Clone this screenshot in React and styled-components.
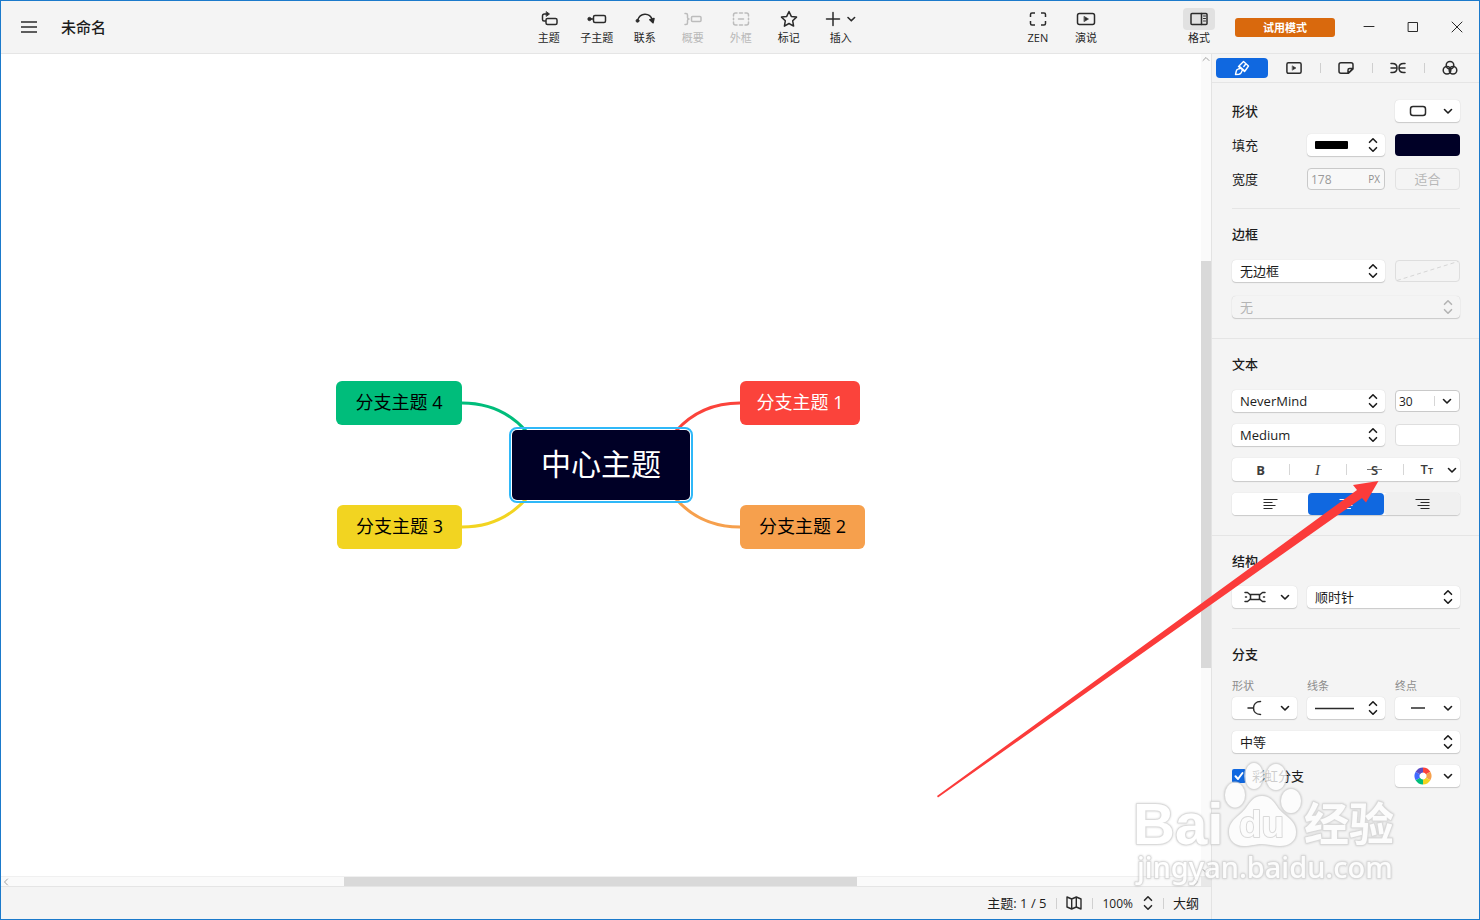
import React from 'react';
import styled, { createGlobalStyle, css } from 'styled-components';

const GlobalStyle = createGlobalStyle`
  *, *::before, *::after { box-sizing: border-box; }
  body { margin: 0; background: #f4f4f4; }
  body, button, input, select {
    font-family: "Open Sans", "Noto Sans CJK SC", sans-serif;
    font-size: 13px;
    color: #1c1c1c;
  }
  button { border: 0; padding: 0; background: none; cursor: pointer; }
`;

/* ---------- shell ---------- */
const Shell = styled.div`
  position: relative;
  display: flex;
  flex-direction: column;
  min-height: 100vh;
  border: 1px solid #1b7acb;
  background: #f4f4f4;
  overflow: hidden;
`;

const Header = styled.header`
  display: grid;
  grid-template-columns: minmax(0, 523fr) auto minmax(0, 145fr) auto minmax(0, 65fr) auto;
  height: 53px;
  border-bottom: 1px solid #e5e5e5;
`;

const DocInfo = styled.div`
  display: flex;
  align-items: center;
  gap: 24px;
  padding-left: 20px;
`;

const MenuButton = styled.button`
  display: flex;
  width: 16px;
  height: 16px;
`;

const DocTitle = styled.h1`
  margin: 0;
  font-size: 15px;
  font-weight: 500;
  line-height: 20px;
`;

const ToolGroup = styled.div`
  display: flex;
`;

const Tool = styled.button`
  display: flex;
  flex-direction: column;
  align-items: center;
  width: ${p => (p.$wide ? 56 : 48)}px;
  padding-top: 7px;
  font-size: 11px;
  line-height: 16px;
  color: ${p => (p.disabled ? '#b9b9b9' : '#262626')};
  span { white-space: nowrap; }
  svg { border-radius: 4px; background: ${p => (p.$active ? '#e1e1e1' : 'none')}; }
`;

const HeaderEnd = styled.div`
  display: flex;
  align-items: center;
`;

const FormatSlot = styled.div`
  align-self: stretch;
  display: flex;
  margin-right: 12px;
`;

const TrialButton = styled.button`
  width: 100px;
  height: 19px;
  margin-right: 12px;
  border-radius: 3px;
  background: #d9690d;
  color: #fff;
  font-size: 11px;
  line-height: 19px;
  font-weight: 700;
`;

const WindowButton = styled.button`
  display: flex;
  align-items: center;
  justify-content: center;
  width: 44px;
  height: 52px;
`;

const Body = styled.div`
  display: flex;
  flex: 1;
`;

const Workspace = styled.main`
  display: flex;
  flex-direction: column;
  flex: 1;
  min-width: 0;
`;

const CanvasRow = styled.div`
  display: flex;
  flex: 1;
`;

const Canvas = styled.div`
  display: flex;
  flex: 1;
  align-items: center;
  justify-content: center;
  background: #fff;
`;

/* ---------- scroll bars ---------- */
const Scroll = styled.div`
  display: flex;
  background: #fafafa;
  ${p => (p.$vertical
    ? css`flex-direction: column; width: 10px;`
    : css`flex: 1; height: 10px; border-top: 1px solid #f0f0f0;`)}
`;
const ScrollSpace = styled.div`flex: ${p => p.$grow};`;
const ScrollThumb = styled.div`flex: ${p => p.$grow}; background: #d9d9d9;`;
const ScrollArrow = styled.button`
  display: flex;
  align-items: center;
  justify-content: center;
  width: 10px;
  height: 10px;
`;
const ScrollRow = styled.div`display: flex;`;
const ScrollCorner = styled.div`width: 10px; height: 10px; background: #e8e8e8;`;

/* ---------- mind map ---------- */
const MapArea = styled.div`
  position: relative;
  width: 530px;
  height: 168px;
`;
const Links = styled.svg`position: absolute; inset: 0;`;
const Topic = styled.div`
  position: absolute;
  display: flex;
  align-items: center;
  justify-content: center;
  left: ${p => p.$x}px;
  top: ${p => p.$y}px;
  width: ${p => p.$w}px;
  height: 44px;
  padding-bottom: 2px;
  border-radius: 6px;
  background: ${p => p.$bg};
  color: ${p => p.$fg || '#000'};
  font-size: 18px;
  line-height: 24px;
  white-space: pre;
`;
const CentralTopic = styled(Topic)`
  height: 70px;
  border-radius: 5px;
  font-size: 30px;
  line-height: 40px;
  outline: 2px solid #2fb8f8;
  outline-offset: 1px;
`;

/* ---------- status bar ---------- */
const StatusBar = styled.footer`
  display: flex;
  align-items: center;
  justify-content: flex-end;
  height: 33px;
  padding-right: 12px;
  border-top: 1px solid #e5e5e5;
`;
const StatusSep = styled.span`
  width: 1px;
  height: 11px;
  margin: 0 9px 0 10px;
  background: #d0d0d0;
`;
const StatusText = styled.span`
  font-size: 13px;
  line-height: 20px;
  white-space: pre;
`;
const StatusButton = styled.button`
  display: flex;
  align-items: center;
  gap: 10px;
  height: 20px;
  font-size: 12px;
`;

/* ---------- format panel ---------- */
const Panel = styled.aside`
  width: 268px;
  border-left: 1px solid #e3e3e3;
`;
const Tabs = styled.div`
  display: flex;
  height: 29px;
  padding: 4px 3px 4px 4px;
  border-bottom: 1px solid #e5e5e5;
`;
const Tab = styled.button`
  position: relative;
  display: flex;
  flex: 1;
  align-items: center;
  justify-content: center;
  height: 20px;
  border-radius: 4px;
  background: ${p => (p.$active ? '#1068e0' : 'none')};
  ${p => p.$divided && css`
    &::after {
      content: '';
      position: absolute;
      right: -1px;
      top: 5px;
      width: 1px;
      height: 10px;
      background: #cfcfcf;
    }
  `}
`;
const Section = styled.section`
  display: flex;
  flex-direction: column;
  gap: ${p => p.$gap || 12}px;
  ${p => (p.$full
    ? css`padding: 15px 19px 20px 20px;`
    : css`margin: 0 19px 0 20px; padding: ${p.$first ? '17px 0 18px' : '15px 0 20px'};`)}
  border-bottom: ${p => (p.$last ? '0' : '1px solid #e5e5e5')};
`;
const SectionTitle = styled.h2`
  margin: 0 0 ${p => p.$space || 0}px;
  font-size: 13px;
  line-height: 20px;
  font-weight: 500;
`;
const Row = styled.div`
  display: grid;
  grid-template-columns: 65fr 78fr 65fr;
  column-gap: 10px;
  align-items: center;
`;
const span = css`grid-column: span ${p => p.$span || 1};`;
const RowLabel = styled.label`
  ${span}
  font-size: 13px;
  line-height: 20px;
  font-weight: ${p => (p.$strong ? 500 : 400)};
`;
const Caption = styled.span`
  font-size: 11px;
  line-height: 16px;
  color: #8c8c8c;
`;
const CaptionRow = styled(Row)`margin-bottom: -9px;`;

const surface = css`
  height: 22px;
  border-radius: 4px;
  background: #fff;
  box-shadow: 0 0 1px rgba(0, 0, 0, 0.18), 0 1px 1px rgba(0, 0, 0, 0.16);
`;
const Picker = styled.button`
  ${span}
  ${surface}
  display: flex;
  align-items: center;
  justify-content: space-between;
  padding: 0 7px 0 ${p => p.$pad || 8}px;
`;
const SelectBox = styled.div`
  ${span}
  ${surface}
  display: grid;
  align-items: center;
  > * { grid-area: 1 / 1; }
  > svg { justify-self: end; margin-right: 7px; pointer-events: none; }
  ${p => p.$disabled && css`background: #f4f4f4;`}
`;
const Select = styled.select`
  appearance: none;
  width: 100%;
  height: 22px;
  padding: 0 24px 0 8px;
  border: 0;
  background: transparent;
  color: #1c1c1c;
  opacity: 1;
  &:disabled { color: #b4b4b4; }
`;
const Swatch = styled.button`
  height: 22px;
  border-radius: 4px;
  background: ${p => p.$color};
  ${p => p.$outlined && css`border: 1px solid #dedede;`}
  svg { display: block; width: 100%; height: 100%; }
`;
const Field = styled.div`
  display: flex;
  align-items: center;
  height: 22px;
  padding: 0 4px 0 3px;
  border: 1px solid #c9c9c9;
  border-radius: 4px;
  background: ${p => (p.$white ? '#fff' : '#f8f8f8')};
  small { font-size: 10px; color: #8f8f8f; }
`;
const FieldInput = styled.input`
  flex: 1;
  min-width: 0;
  width: 20px;
  padding: 0;
  border: 0;
  background: transparent;
  font-size: 12px;
  &:disabled { color: #9a9a9a; }
`;
const FieldButton = styled.button`
  display: flex;
  padding: 0 3px 0 7px;
  border-left: 1px solid #d6d6d6;
`;
const FitButton = styled.button`
  height: 22px;
  border: 1px solid #e2e2e2;
  border-radius: 4px;
  color: #b8b8b8;
  line-height: 20px;
`;
const StyleBar = styled.div`
  ${surface}
  display: flex;
  height: 23px;
`;
const StyleButton = styled.button`
  position: relative;
  display: flex;
  width: 25%;
  align-items: center;
  justify-content: ${p => (p.$menu ? 'flex-end' : 'center')};
  gap: 14px;
  padding-right: ${p => (p.$menu ? 3 : 0)}px;
  color: #3c3c3c;
  &:not(:first-child)::before {
    content: '';
    position: absolute;
    left: 0;
    top: 6px;
    width: 1px;
    height: 11px;
    background: #d6d6d6;
  }
`;
const Glyph = styled.span`
  font-family: ${p => (p.$serif ? '"Liberation Serif", serif' : '"Open Sans", sans-serif')};
  font-size: ${p => p.$size || 13}px;
  line-height: 20px;
  font-weight: ${p => p.$weight || 400};
  font-style: ${p => (p.$serif ? 'italic' : 'normal')};
`;
const Struck = styled(Glyph)`
  padding: 0 4px;
  background: linear-gradient(#777, #777) center / 100% 1px no-repeat;
`;
const CaseGlyphs = styled.span`
  display: flex;
  align-items: baseline;
`;
const AlignBar = styled.div`
  ${surface}
  display: flex;
`;
const AlignButton = styled.button`
  display: flex;
  flex: 1;
  align-items: center;
  justify-content: center;
  border-radius: 4px;
  background: ${p => p.$bg};
`;
const CheckLabel = styled.label`
  grid-column: span 2;
  display: flex;
  align-items: center;
  gap: 6px;
  line-height: 20px;
`;
const Check = styled.input`
  appearance: none;
  width: 14px;
  height: 14px;
  margin: 0;
  border-radius: 2px;
  background: #1068e0;
`;
const CheckBoxWrap = styled.span`
  display: grid;
  > * { grid-area: 1 / 1; }
  > svg { pointer-events: none; }
`;

/* ---------- overlays ---------- */
const Overlay = styled.svg`
  position: absolute;
  right: ${p => p.$right}px;
  top: ${p => p.$top}px;
  pointer-events: none;
`;
const WatermarkArt = styled(Overlay)`
  opacity: 0.78;
  fill: #fff;
  stroke: #d2d2d2;
  stroke-width: 2px;
  stroke-linejoin: round;
  paint-order: stroke;
  filter: drop-shadow(0 0 1px rgba(0, 0, 0, 0.2));
`;
const BrandText = styled.text`
  font-family: ${p => (p.$cjk ? '"Noto Sans CJK SC"' : '"Liberation Sans"')}, sans-serif;
  font-size: ${p => p.$size}px;
  font-weight: 700;
`;
const UrlText = styled.text`
  font-family: "Noto Sans", sans-serif;
  font-size: 29px;
  font-weight: 500;
`;

/* ---------- icons ---------- */
const Ico = ({ w = 32, h = 22, sw = 1.5, color = '#2b2b2b', children }) => (
  <svg width={w} height={h} viewBox={`0 0 ${w} ${h}`} fill="none" stroke={color}
    strokeWidth={sw} strokeLinecap="round" strokeLinejoin="round" aria-hidden="true">
    {children}
  </svg>
);
const Chevron = () => <Ico w={10} h={10} sw={1.6} color="#1c1c1c"><path d="M1.5 3.5 5 7l3.5-3.5" /></Ico>;
const UpDown = ({ color = '#1c1c1c' }) => (
  <Ico w={10} h={16} sw={1.6} color={color}><path d="M1.5 5.3 5 1.8l3.5 3.5M1.500 10.7 5 14.2l3.5-3.5" /></Ico>
);

const icons = {
  topic: <Ico><rect x="13" y="10.500" width="11" height="6" rx="1.500" /><path d="M14 6h-2.500Q9.500 6 9.500 8v3.500q0 1.500 1.500 1.500h1.500" /><path d="m13.500 3.800 3 2.200-3 2.200z" fill="#2b2b2b" strokeWidth="0.800" /></Ico>,
  sub: <Ico><rect x="12.500" y="7.500" width="12" height="7" rx="1.500" /><path d="M9 11h3" /><circle cx="8.500" cy="11" r="1.700" fill="#2b2b2b" strokeWidth="0.800" /></Ico>,
  link: <Ico><path d="M8.500 12.500c2.500-8 12-8.500 15-.5" /><circle cx="8.500" cy="12.800" r="1.500" fill="#2b2b2b" strokeWidth="0.800" /><path d="m20.800 11.800 4.200-1.300-1 4.300z" fill="#2b2b2b" /></Ico>,
  summary: <Ico color="#bcbcbc"><path d="M8 5.500h1q1.500 0 1.500 1.500v2.500q0 1.500 1.500 1.500-1.500 0-1.500 1.500V15q0 1.500-1.500 1.500H8" /><rect x="14.500" y="8.500" width="9.500" height="5" rx="1" /></Ico>,
  boundary: <Ico color="#bcbcbc"><path d="M8.500 8V7q0-2 2-2H12M14.500 5h3M20 5h1.500q2 0 2 2v1M23.500 10.200v1.600M23.500 14v1q0 2-2 2H20M17.500 17h-3M12 17h-1.500q-2 0-2-2v-1M8.500 11.800v-1.600M13.500 11h5" /></Ico>,
  star: <Ico><path d="m16 3.500 2.300 4.900 5.200.7-3.800 3.700.9 5.300-4.600-2.600-4.600 2.600.9-5.300-3.800-3.700 5.200-.7z" /></Ico>,
  plus: <Ico><path d="M8 4.500v13M1.500 11h13" /><path d="m23 9.500 3.300 3.300 3.300-3.300" strokeWidth="1.600" /></Ico>,
  zen: <Ico><path d="M8.500 9V6.500q0-1.500 1.500-1.500h3M19 5h3q1.500 0 1.500 1.500V9M23.500 13v2.500q0 1.500-1.500 1.500h-3M13 17h-3q-1.500 0-1.500-1.500V13" strokeLinecap="butt" /></Ico>,
  play: <Ico><rect x="7.500" y="5.500" width="17" height="11" rx="2" /><path d="m14.300 8.500 4.200 2.500-4.200 2.500z" fill="#2b2b2b" strokeWidth="0.600" /></Ico>,
  format: <Ico><rect x="8" y="5.500" width="16" height="11" rx="1" /><path d="M18.500 5.500v11" /><path d="M20.500 8h2M20.500 10.500h2M20.500 13h2" strokeWidth="1" /></Ico>,
};

const tools = [
  { icon: icons.topic, label: '主题' },
  { icon: icons.sub, label: '子主题' },
  { icon: icons.link, label: '联系' },
  { icon: icons.summary, label: '概要', disabled: true },
  { icon: icons.boundary, label: '外框', disabled: true },
  { icon: icons.star, label: '标记' },
  { icon: icons.plus, label: '插入', wide: true },
];

const tabs = [
  { label: '样式', icon: <Ico w={16} h={16} sw={1.4} color="#fff"><path d="m9.500 1.500 5 4.500-3.500 5-6-5zM4.500 6.500l6 5M12 3.800 9.800 6.500M6 8.500l-2 .7q-1.300.4-1.700 1.800L1.500 14.500l3.500-.3q1.700-.2 2.300-1.700L8 10.800" /></Ico> },
  { label: '演说', divided: true, icon: <Ico w={16} h={16}><rect x="0.900" y="2.700" width="14.200" height="10.600" rx="1.500" /><path d="m6.500 5.900 3.500 2.100-3.500 2.100z" fill="#2b2b2b" strokeWidth="0.500" /></Ico> },
  { label: '标记', divided: true, icon: <Ico w={16} h={16}><path d="M3 2.700h10q2 0 2 2V9l-4.500 4.300H3q-2 0-2-2V4.700q0-2 2-2zM15 8.500h-3.500q-1.500 0-1.500 1.500v3.300z" /></Ico> },
  { label: '结构', divided: true, icon: <Ico w={16} h={16}><path d="M1 3.500h1.500Q7 3.500 7 8t-4.500 4.500H1M1 8h6M15 3.500h-1.500Q9 3.500 9 8t4.500 4.500H15M9 8h6" /></Ico> },
  { label: '配色', icon: <Ico w={16} h={16}><circle cx="8" cy="5.200" r="3.800" /><circle cx="5" cy="10.200" r="3.800" /><circle cx="11" cy="10.200" r="3.800" /></Ico> },
];

const branches = [
  { text: '分支主题 4', x: 0, y: 0, w: 126, bg: '#00bd7b' },
  { text: '分支主题 3', x: 1, y: 124, w: 125, bg: '#f2d421' },
  { text: '分支主题 1', x: 404, y: 0, w: 120, bg: '#fb433b', fg: '#fff' },
  { text: '分支主题 2', x: 404, y: 124, w: 125, bg: '#f6a04d' },
];

const alignPaths = {
  left: 'M.5 1.500h14M.5 4.500h9M.5 7.500h12M.5 10.500h9',
  center: 'M.5 1.500h14M3 4.500h9M1.500 7.500h12M3 10.500h9',
  right: 'M.5 1.500h14M5.500 4.500h9M2.500 7.500h12M5.500 10.500h9',
};
const AlignIcon = ({ kind, color }) => (
  <Ico w={15} h={12} sw={1.2} color={color}><path d={alignPaths[kind]} strokeLinecap="butt" /></Ico>
);

const wheel = ['#fb433b', '#f6a04d', '#f2d421', '#00bd7b', '#4169ff', '#5b4bc4'];

function DropSelect({ label, value, cols, disabled }) {
  return (
    <SelectBox $span={cols} $disabled={disabled}>
      <Select aria-label={label} defaultValue={value} disabled={disabled}>
        <option>{value}</option>
      </Select>
      <UpDown color={disabled ? '#b4b4b4' : undefined} />
    </SelectBox>
  );
}

function TopBar() {
  return (
    <Header>
      <DocInfo>
        <MenuButton aria-label="菜单"><Ico w={16} h={16} sw={1.6}><path d="M0 3h16M0 8h16M0 13h16" strokeLinecap="butt" /></Ico></MenuButton>
        <DocTitle>未命名</DocTitle>
      </DocInfo>
      <ToolGroup>
        {tools.map(t => (
          <Tool key={t.label} disabled={t.disabled} $wide={t.wide}>{t.icon}<span>{t.label}</span></Tool>
        ))}
      </ToolGroup>
      <div />
      <ToolGroup>
        <Tool>{icons.zen}<span>ZEN</span></Tool>
        <Tool>{icons.play}<span>演说</span></Tool>
      </ToolGroup>
      <div />
      <HeaderEnd>
        <FormatSlot><Tool $active>{icons.format}<span>格式</span></Tool></FormatSlot>
        <TrialButton>试用模式</TrialButton>
        <WindowButton aria-label="最小化"><Ico w={12} h={12} sw={1}><path d="M1 5.500h10" /></Ico></WindowButton>
        <WindowButton aria-label="最大化"><Ico w={12} h={12} sw={1}><rect x="1.500" y="1.500" width="9" height="9" /></Ico></WindowButton>
        <WindowButton aria-label="关闭"><Ico w={12} h={12} sw={1}><path d="m1 1 10 10M11 1 1 11" /></Ico></WindowButton>
      </HeaderEnd>
    </Header>
  );
}

function MindMap() {
  return (
    <Canvas>
      <MapArea>
        <Links width="530" height="168" viewBox="0 0 530 168" fill="none" strokeWidth="3">
          <path d="M126 22c28 0 48 10 64 28" stroke="#00bd7b" />
          <path d="M126 146c28 0 48-10 64-28" stroke="#f2d421" />
          <path d="M404 22c-28 0-48 10-64 28" stroke="#fb433b" />
          <path d="M404 146c-28 0-48-10-64-28" stroke="#f6a04d" />
        </Links>
        {branches.map(b => (
          <Topic key={b.text} $x={b.x} $y={b.y} $w={b.w} $bg={b.bg} $fg={b.fg}>{b.text}</Topic>
        ))}
        <CentralTopic $x={176} $y={49} $w={178} $bg="#000026" $fg="#fff">中心主题</CentralTopic>
      </MapArea>
    </Canvas>
  );
}

const arrow = d => <Ico w={8} h={8} sw={1} color="#a0a0a0"><path d={d} /></Ico>;

function FormatPanel() {
  return (
    <Panel>
      <Tabs>
        {tabs.map((t, i) => (
          <Tab key={t.label} aria-label={t.label} $active={i === 0} $divided={t.divided}>{t.icon}</Tab>
        ))}
      </Tabs>

      <Section $first>
        <Row>
          <RowLabel as="span" $span={2} $strong>形状</RowLabel>
          <Picker aria-label="形状" $pad={14}>
            <Ico w={18} h={12}><rect x="1.500" y="1.500" width="15" height="9" rx="2.500" /></Ico><Chevron />
          </Picker>
        </Row>
        <Row>
          <RowLabel as="span">填充</RowLabel>
          <Picker aria-label="填充">
            <svg width="33" height="8" aria-hidden="true"><rect width="33" height="8" rx="1" /></svg><UpDown />
          </Picker>
          <Swatch aria-label="填充颜色" $color="#000026" />
        </Row>
        <Row>
          <RowLabel htmlFor="topic-width">宽度</RowLabel>
          <Field><FieldInput id="topic-width" defaultValue="178" disabled /><small>PX</small></Field>
          <FitButton disabled>适合</FitButton>
        </Row>
      </Section>

      <Section $full $gap={14}>
        <SectionTitle $space={2}>边框</SectionTitle>
        <Row>
          <DropSelect label="边框" value="无边框" cols={2} />
          <Swatch aria-label="边框颜色" $color="none" $outlined disabled>
            <svg viewBox="0 0 63 20" preserveAspectRatio="none" aria-hidden="true"><path d="M1 19.500 62 .5" stroke="#d6d6d6" strokeDasharray="4 3" /></svg>
          </Swatch>
        </Row>
        <Row><DropSelect label="边框粗细" value="无" cols={3} disabled /></Row>
      </Section>

      <Section $full>
        <SectionTitle $space={4}>文本</SectionTitle>
        <Row>
          <DropSelect label="字体" value="NeverMind" cols={2} />
          <Field $white>
            <FieldInput aria-label="字号" defaultValue="30" />
            <FieldButton aria-label="选择字号"><Chevron /></FieldButton>
          </Field>
        </Row>
        <Row>
          <DropSelect label="字重" value="Medium" cols={2} />
          <Swatch aria-label="文本颜色" $color="#fff" $outlined />
        </Row>
        <StyleBar>
          <StyleButton aria-label="粗体"><Glyph $weight={700}>B</Glyph></StyleButton>
          <StyleButton aria-label="斜体"><Glyph $serif $size={15}>I</Glyph></StyleButton>
          <StyleButton aria-label="删除线"><Struck $weight={600}>S</Struck></StyleButton>
          <StyleButton aria-label="大小写" $menu>
            <CaseGlyphs><Glyph $weight={600}>T</Glyph><Glyph $size={9} $weight={600}>T</Glyph></CaseGlyphs><Chevron />
          </StyleButton>
        </StyleBar>
        <AlignBar>
          <AlignButton aria-label="左对齐" $bg="#fff"><AlignIcon kind="left" /></AlignButton>
          <AlignButton aria-label="居中" aria-pressed="true" $bg="#1068e0"><AlignIcon kind="center" color="#fff" /></AlignButton>
          <AlignButton aria-label="右对齐" $bg="#f0f0f0"><AlignIcon kind="right" /></AlignButton>
        </AlignBar>
      </Section>

      <Section>
        <SectionTitle $space={3}>结构</SectionTitle>
        <Row>
          <Picker aria-label="结构" $pad={12}>
            <Ico w={22} h={14}>
              <rect x="6.500" y="4.500" width="9" height="5" />
              <path d="M1 2.500h2.500L6.500 5M1 11.500h2.500L6.500 9M21 2.500h-2.500L15.500 5M21 11.500h-2.500L15.500 9M1.500 7h1M19.500 7h1" />
            </Ico>
            <Chevron />
          </Picker>
          <DropSelect label="排列方向" value="顺时针" cols={2} />
        </Row>
      </Section>

      <Section $last>
        <SectionTitle $space={2}>分支</SectionTitle>
        <CaptionRow><Caption>形状</Caption><Caption>线条</Caption><Caption>终点</Caption></CaptionRow>
        <Row>
          <Picker aria-label="分支形状" $pad={14}>
            <Ico w={16} h={16}><path d="M2 8h5M14.500 1.500C10 1.500 7.500 4.500 7.500 8s2.500 6.500 7 6.500" /></Ico><Chevron />
          </Picker>
          <Picker aria-label="分支线条"><Ico w={39} h={4}><path d="M0 2.500h39" strokeLinecap="butt" /></Ico><UpDown /></Picker>
          <Picker aria-label="分支终点" $pad={16}><Ico w={14} h={4}><path d="M0 2h14" strokeLinecap="butt" /></Ico><Chevron /></Picker>
        </Row>
        <Row><DropSelect label="线条粗细" value="中等" cols={3} /></Row>
        <Row>
          <CheckLabel>
            <CheckBoxWrap>
              <Check type="checkbox" defaultChecked />
              <Ico w={14} h={14} sw={2} color="#fff"><path d="m3.500 7.300 2.500 2.700 4.500-6" /></Ico>
            </CheckBoxWrap>
            彩虹分支
          </CheckLabel>
          <Picker aria-label="彩虹配色" $pad={19}>
            <svg width="18" height="18" viewBox="-9 -9 18 18" fill="none" strokeWidth="5" aria-hidden="true">
              {wheel.map((c, i) => (
                <path key={c} d="M0-6A6 6 0 0 1 5.200-3" stroke={c} transform={`rotate(${i * 60})`} />
              ))}
            </svg>
            <Chevron />
          </Picker>
        </Row>
      </Section>
    </Panel>
  );
}

function Watermark() {
  return (
    <WatermarkArt $right={70} $top={758} width="280" height="136" viewBox="1130 759 280 136">
      <BrandText x="1134" y="844" $size={58}>Bai</BrandText>
      <ellipse cx="1236" cy="795" rx="10" ry="12.500" />
      <ellipse cx="1255" cy="776" rx="9" ry="13" />
      <ellipse cx="1277" cy="777" rx="10" ry="13" />
      <ellipse cx="1292" cy="801" rx="10" ry="12" />
      <path d="M1263 796c8 0 12 6 16 12 6 8 18 12 18 24 0 10-8 14-16 14-7 0-11-2-18-2s-11 2-18 2c-8 0-15-5-15-14 0-12 11-16 17-24 5-7 8-12 16-12z" />
      <BrandText x="1240" y="837" $size={37}>du</BrandText>
      <BrandText x="1305" y="841" $size={45} $cjk>经验</BrandText>
      <UrlText x="1138" y="878">jingyan.baidu.com</UrlText>
    </WatermarkArt>
  );
}

export default function App() {
  return (
    <>
      <GlobalStyle />
      <Shell>
        <TopBar />
        <Body>
          <Workspace>
            <CanvasRow>
              <MindMap />
              <Scroll $vertical>
                <ScrollArrow aria-label="向上滚动">{arrow('M1 5.500 4 2.500l3 3')}</ScrollArrow>
                <ScrollSpace $grow={197} /><ScrollThumb $grow={407} /><ScrollSpace $grow={198} />
                <ScrollArrow aria-label="向下滚动">{arrow('M1 2.500 4 5.500l3-3')}</ScrollArrow>
              </Scroll>
            </CanvasRow>
            <ScrollRow>
              <Scroll>
                <ScrollArrow aria-label="向左滚动">{arrow('M5.500 1 2.500 4l3 3')}</ScrollArrow>
                <ScrollSpace $grow={333} /><ScrollThumb $grow={513} /><ScrollSpace $grow={334} />
                <ScrollArrow aria-label="向右滚动">{arrow('M2.500 1l3 3-3 3')}</ScrollArrow>
              </Scroll>
              <ScrollCorner />
            </ScrollRow>
            <StatusBar>
              <StatusText>主题: 1 / 5</StatusText>
              <StatusSep />
              <StatusButton aria-label="缩略图">
                <Ico w={16} h={16} sw={1.400}><path d="M1 2l4.700 2 4.600-2L15 4v10l-4.700-2-4.600 2L1 12zM5.700 4v10M10.300 2v10" /></Ico>
              </StatusButton>
              <StatusSep />
              <StatusButton>100%<UpDown color="#2b2b2b" /></StatusButton>
              <StatusSep />
              <StatusText>大纲</StatusText>
            </StatusBar>
          </Workspace>
          <FormatPanel />
        </Body>
        <Overlay $right={99} $top={479} width="444" height="320" viewBox="936 480 444 320">
          <path d="M937 796 1357 490 1353 485 1378.500 481 1366 502.500 1362 498 938 797.500z" fill="#fb3b3a" />
        </Overlay>
        <Watermark />
      </Shell>
    </>
  );
}
